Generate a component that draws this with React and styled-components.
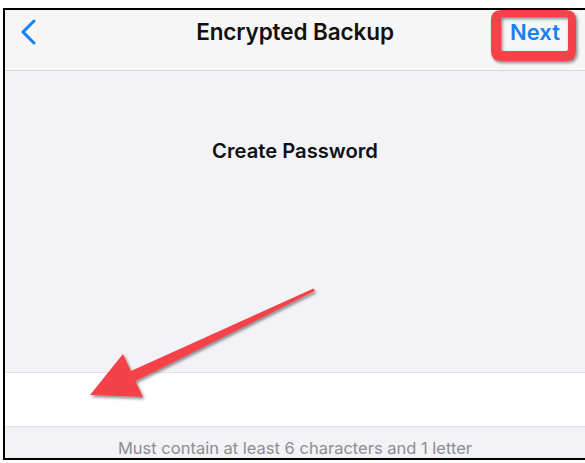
import React from "react";
import styled, { createGlobalStyle } from "styled-components";

const GlobalStyle = createGlobalStyle`
  html, body { margin: 0; padding: 0; background: #ffffff; }
  body { font-family: Inter, "Noto Sans", "Liberation Sans", sans-serif; -webkit-font-smoothing: antialiased; }
  * { box-sizing: border-box; }
`;

const Page = styled.div`
  position: relative;
  width: 585px;
  height: 463px;
  overflow: hidden;
  padding: 8px 0 0 3px;
`;

const Frame = styled.div`
  height: 452px;
  border: 2px solid #000;
  border-right: none;
  display: flex;
  flex-direction: column;
  overflow: hidden;
`;

const NavBar = styled.header`
  height: 61px;
  flex: none;
  background: #f6f6f6;
  border-bottom: 1px solid #d9d9d9;
  display: grid;
  grid-template-columns: 100px 1fr 100px;
  align-items: center;
  padding-bottom: 16px;
`;

const BackButton = styled.div`
  display: flex;
  align-items: center;
  padding-left: 15px;
  color: #1a7ff5;
`;

const Title = styled.h1`
  margin: 0;
  text-align: center;
  font-size: 22.5px;
  line-height: 28px;
  font-weight: 600;
  color: #111;
  letter-spacing: -0.1px;
`;

const NavAction = styled.div`
  justify-self: end;
  padding-right: 25px;
  font-size: 22px;
  line-height: 28px;
  font-weight: 600;
  color: #1a7ff5;
`;

const Content = styled.main`
  flex: 1;
  background: #f2f2f7;
  display: flex;
  flex-direction: column;
`;

const Heading = styled.h2`
  margin: 0;
  padding-top: 68px;
  text-align: center;
  font-size: 20.2px;
  font-weight: 600;
  color: #111;
  line-height: 24px;
`;

const Spacer = styled.div`
  flex: 1;
`;

const Field = styled.div`
  height: 55px;
  flex: none;
  background: #ffffff;
  border-top: 1px solid #e2e2e6;
  border-bottom: 1px solid #e2e2e6;
`;

const Hint = styled.p`
  margin: 0;
  height: 31px;
  flex: none;
  display: flex;
  align-items: center;
  justify-content: center;
  padding-top: 10px;
  font-size: 16.5px;
  color: #8e8e93;
`;

const Overlay = styled.svg`
  position: absolute;
  left: 0;
  top: 0;
  pointer-events: none;
`;

export default function App() {
  return (
    <>
      <GlobalStyle />
      <Page>
        <Frame>
          <NavBar>
            <BackButton>
              <svg width="16" height="26" viewBox="0 0 16 26">
                <path d="M14 2 L3 13 L14 24" fill="none" stroke="currentColor" strokeWidth="3" strokeLinecap="round" strokeLinejoin="round" />
              </svg>
            </BackButton>
            <Title>Encrypted Backup</Title>
            <NavAction>Next</NavAction>
          </NavBar>
          <Content>
            <Heading>Create Password</Heading>
            <Spacer />
            <Field />
            <Hint>Must contain at least 6 characters and 1 letter</Hint>
          </Content>
        </Frame>
        <Overlay width="585" height="463" viewBox="0 0 585 463">
          <defs>
            <filter id="sh" x="-20%" y="-20%" width="140%" height="140%">
              <feDropShadow dx="1.5" dy="2" stdDeviation="1.5" floodColor="#000" floodOpacity="0.45" />
            </filter>
          </defs>
          <path
            filter="url(#sh)"
            fillRule="evenodd"
            fill="#f5424a"
            d="M501 10 H566 Q576 10 576 20 V51 Q576 61 566 61 H501 Q491 61 491 51 V20 Q491 10 501 10 Z M503 17 Q501 17 501 19 V49 Q501 51 503 51 H566 Q568 51 568 49 V19 Q568 17 566 17 Z"
          />
          <polygon
            filter="url(#sh)"
            fill="#f5424a"
            points="313.5,288.5 131,371 123,354 90,395 143,397 135.5,381 314.8,291"
          />
        </Overlay>
      </Page>
    </>
  );
}
